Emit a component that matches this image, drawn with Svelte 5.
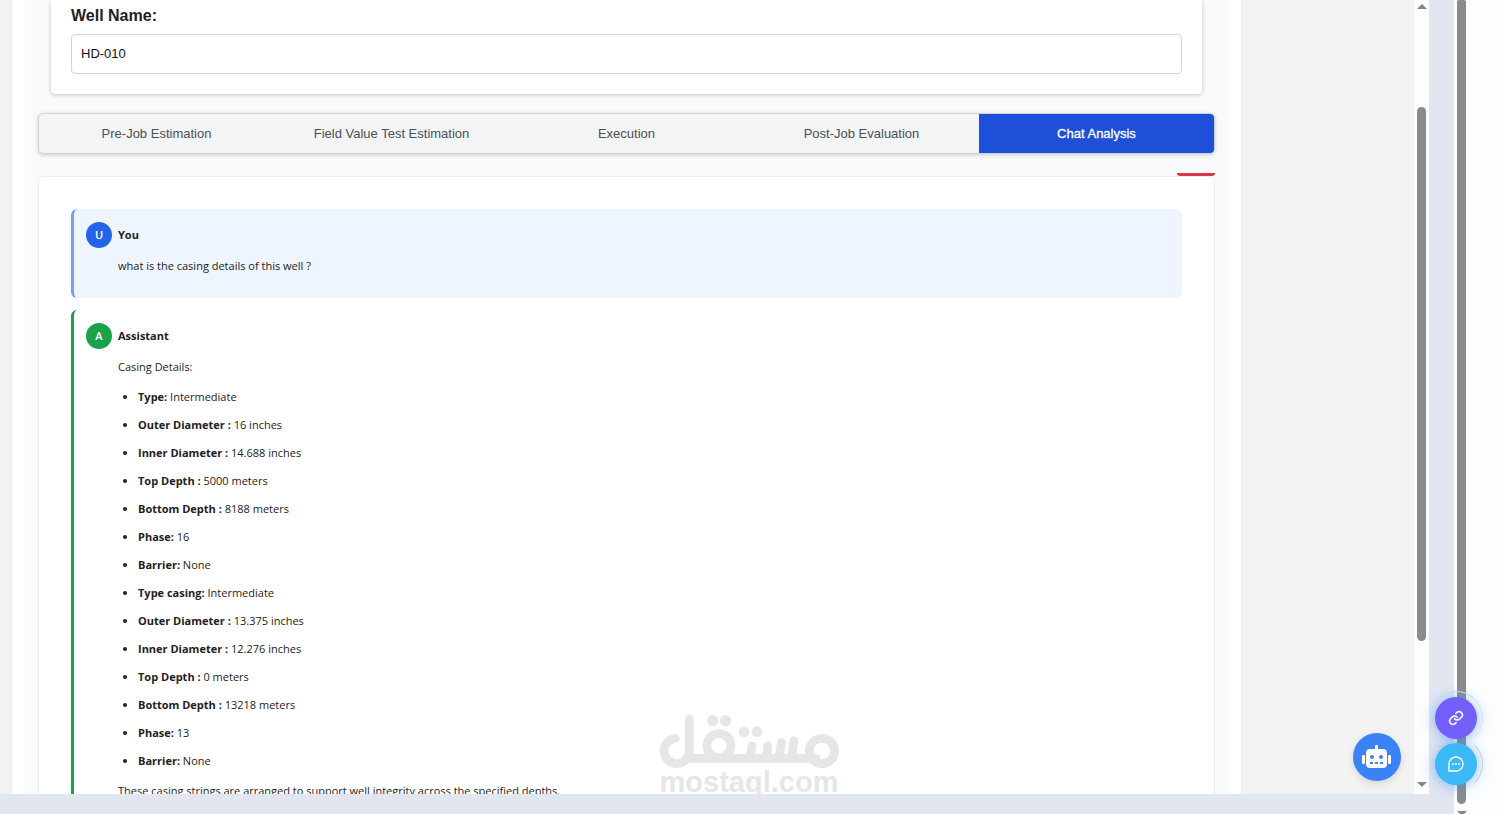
<script lang="ts">
	let wellName = $state('HD-010');
	let activeTab = $state('Chat Analysis');

	const tabs = [
		'Pre-Job Estimation',
		'Field Value Test Estimation',
		'Execution',
		'Post-Job Evaluation',
		'Chat Analysis'
	];

	const details = [
		{ label: 'Type:', value: 'Intermediate' },
		{ label: 'Outer Diameter :', value: '16 inches' },
		{ label: 'Inner Diameter :', value: '14.688 inches' },
		{ label: 'Top Depth :', value: '5000 meters' },
		{ label: 'Bottom Depth :', value: '8188 meters' },
		{ label: 'Phase:', value: '16' },
		{ label: 'Barrier:', value: 'None' },
		{ label: 'Type casing:', value: 'Intermediate' },
		{ label: 'Outer Diameter :', value: '13.375 inches' },
		{ label: 'Inner Diameter :', value: '12.276 inches' },
		{ label: 'Top Depth :', value: '0 meters' },
		{ label: 'Bottom Depth :', value: '13218 meters' },
		{ label: 'Phase:', value: '13' },
		{ label: 'Barrier:', value: 'None' }
	];
</script>

<div class="shell">
	<div class="shell__main">
		<div class="frame">
			<div class="frame__view">
				<main class="page">
					<div class="content">
						<section class="well">
							<label class="well__label" for="well-name">Well Name:</label>
							<input class="well__input" id="well-name" type="text" bind:value={wellName} />
						</section>

						<nav class="tabs">
							{#each tabs as tab}
								<button
									class="tab"
									class:tab--active={activeTab === tab}
									onclick={() => (activeTab = tab)}>{tab}</button
								>
							{/each}
						</nav>

						<section class="chat">
							<div class="chat__marker"></div>
							<article class="message message--user">
								<header class="message__head">
									<span class="avatar avatar--user">U</span>
									<strong>You</strong>
								</header>
								<div class="message__body">
									<p>what is the casing details of this well ?</p>
								</div>
							</article>

							<article class="message message--assistant">
								<header class="message__head">
									<span class="avatar avatar--assistant">A</span>
									<strong>Assistant</strong>
								</header>
								<div class="message__body">
									<p>Casing Details:</p>
									<ul>
										{#each details as item}
											<li><strong>{item.label}</strong> {item.value}</li>
										{/each}
									</ul>
									<p>These casing strings are arranged to support well integrity across the specified depths.</p>
								</div>
							</article>
						</section>
					</div>
				</main>
				<button class="bot" aria-label="Open assistant">
					<svg width="30" height="24" viewBox="0 0 30 24" fill="#fff">
						<rect x="13" y="0" width="3" height="6" rx="1" />
						<rect x="4" y="4" width="21" height="19" rx="4" />
						<rect x="0" y="10" width="3" height="9" rx="1" />
						<rect x="26" y="10" width="3" height="9" rx="1" />
						<g fill="#3b82f6">
							<circle cx="10" cy="12" r="2" />
							<circle cx="19" cy="12" r="2" />
							<rect x="8" y="17" width="3" height="2" />
							<rect x="13" y="17" width="3" height="2" />
							<rect x="18" y="17" width="3" height="2" />
						</g>
					</svg>
				</button>
			</div>
			<div class="scroll scroll--inner">
				<i class="arrow arrow--up"></i>
				<div class="scroll__track"><div class="scroll__thumb"></div></div>
				<i class="arrow"></i>
			</div>
		</div>
	</div>
	<div class="scroll scroll--outer">
		<div class="scroll__thumb"></div>
		<i class="arrow"></i>
	</div>

	<div class="floating">
		<button class="round round--link" aria-label="Copy link">
			<svg width="16" height="16" viewBox="0 0 24 24" fill="none" stroke="#fff" stroke-width="2.4" stroke-linecap="round" stroke-linejoin="round">
				<path d="M10 13a5 5 0 0 0 7.5.5l3-3a5 5 0 0 0-7-7l-1.8 1.7" />
				<path d="M14 11a5 5 0 0 0-7.5-.5l-3 3a5 5 0 0 0 7 7l1.7-1.7" />
			</svg>
		</button>
		<button class="round round--chat" aria-label="Open chat">
			<svg width="18" height="18" viewBox="0 0 18 18" fill="none" stroke="#fff" stroke-width="1.4">
				<path d="M2 16V9a7 7 0 1 1 7 7z" stroke-linejoin="round" />
				<g fill="#fff" stroke="none">
					<circle cx="6" cy="9" r="1" />
					<circle cx="9" cy="9" r="1" />
					<circle cx="12" cy="9" r="1" />
				</g>
			</svg>
		</button>
	</div>

	<div class="watermark">
		<svg width="182" height="55" viewBox="54 42 546 165" fill="none" stroke="#e6e6e6" stroke-width="26" stroke-linecap="round" aria-hidden="true">
			<circle cx="546" cy="153" r="38" />
			<circle cx="237" cy="137" r="36" />
			<path d="M106 115a38 38 0 1 0 42 38V58" />
			<path d="M140 175H528" />
			<path d="M462 122l-7 48M424 127l-6 43M383 137l-3 33M336 137l-5 33" />
			<g fill="#e6e6e6" stroke="none">
				<circle cx="218" cy="62" r="17" />
				<circle cx="257" cy="62" r="17" />
				<circle cx="312" cy="95" r="16" />
				<circle cx="351" cy="95" r="16" />
			</g>
		</svg>
		<span>mostaql.com</span>
	</div>
</div>

<style>
	:global(body) {
		margin: 0;
	}

	.shell {
		position: relative;
		display: flex;
		height: 100vh;
		overflow: hidden;
		background: #fdfeff;
		font-family: 'Liberation Sans', Arial, sans-serif;
		color: #1f2023;
	}

	.shell__main {
		flex: 1;
		min-width: 0;
		box-sizing: border-box;
		padding: 0 25px 20px 0;
		background: #e1e6f1;
	}

	.frame {
		display: flex;
		height: 100%;
		overflow: hidden;
		background: #f3f3f3;
	}

	.frame__view {
		position: relative;
		flex: 1;
		min-width: 0;
		overflow: hidden;
	}

	.page {
		margin: 0 173px 0 12px;
		padding: 0 13px;
		background: #fff;
		box-shadow: 0 0 2px rgba(0, 0, 0, 0.08);
	}

	.content {
		padding: 0 13px;
		background: #f9fafc;
	}

	.well {
		display: flex;
		flex-direction: column;
		gap: 9px;
		margin: 0 13px;
		padding: 7px 20px 20px;
		background: #fff;
		border-radius: 0 0 4px 4px;
		box-shadow: 0 1px 4px rgba(0, 0, 0, 0.22);
	}

	.well__label {
		font-size: 16px;
		line-height: 18px;
		font-weight: 700;
	}

	.well__input {
		box-sizing: border-box;
		width: 100%;
		height: 40px;
		padding: 0 9px 2px;
		border: 1px solid #d1d4da;
		border-radius: 4px;
		background: #fff;
		color: #111;
		font-family: inherit;
		font-size: 13px;
	}

	.tabs {
		display: flex;
		margin-top: 19px;
		border: 1px solid #cfd2d8;
		border-radius: 5px;
		overflow: hidden;
		background: #f2f4f6;
		box-shadow: 0 1px 4px rgba(0, 0, 0, 0.18);
	}

	.tab {
		flex: 1 1 0;
		min-width: 0;
		height: 39px;
		padding: 0;
		border: 0;
		background: none;
		color: #4b4f56;
		font-family: inherit;
		font-size: 13px;
		cursor: pointer;
	}

	.tab--active {
		background: #1d4fd8;
		color: #fff;
		-webkit-text-stroke: 0.3px #fff;
	}

	.chat {
		position: relative;
		display: flex;
		flex-direction: column;
		gap: 12px;
		margin-top: 22px;
		padding: 32px;
		border: 1px solid #eeeff1;
		border-radius: 5px;
		background: #fff;
		font-family: 'Segoe UI', 'Open Sans', sans-serif;
		font-size: 11px;
		line-height: 20px;
	}

	.chat__marker {
		position: absolute;
		top: -4px;
		right: -1px;
		width: 38px;
		height: 3px;
		border-radius: 0 0 3px 3px;
		background: #dc3545;
	}

	.message {
		padding: 13px 12px 12px;
		border-left: 3px solid;
		border-radius: 6px;
	}

	.message--user {
		border-color: #7b9cf0;
		background: #eef5ff;
	}

	.message--assistant {
		border-color: #18a34a;
	}

	.message__head {
		display: flex;
		align-items: center;
		gap: 6px;
	}

	.avatar {
		display: grid;
		place-items: center;
		width: 26px;
		height: 26px;
		border-radius: 50%;
		color: #fff;
		font-weight: 600;
	}

	.avatar--user {
		background: #2563eb;
	}

	.avatar--assistant {
		background: #18a34a;
	}

	.message__body {
		padding: 8px 0 0 32px;
	}

	.message__body p {
		margin: 0 0 10px;
	}

	.message__body ul {
		display: flex;
		flex-direction: column;
		gap: 8px;
		margin: 0 0 10px;
		padding-left: 20px;
	}

	.bot {
		position: absolute;
		right: 13px;
		bottom: 13px;
		display: grid;
		place-items: center;
		width: 48px;
		height: 48px;
		padding: 0;
		border: 0;
		border-radius: 50%;
		background: #3b82f6;
		box-shadow: 0 3px 8px rgba(0, 0, 0, 0.12);
		cursor: pointer;
	}

	.scroll {
		display: flex;
		flex-direction: column;
		background: #fcfdfd;
	}

	.scroll__thumb {
		width: 9px;
		border-radius: 5px;
		background: #8a8c8b;
	}

	.scroll--inner {
		align-items: center;
		box-sizing: border-box;
		width: 15px;
		padding: 4px 0 7px;
	}

	.scroll__track {
		flex: 1;
		padding: 98px 0 141px;
		display: flex;
	}

	.scroll--outer {
		box-sizing: border-box;
		width: 44px;
		padding-left: 3px;
	}

	.scroll--outer .scroll__thumb {
		flex: 1;
		margin-bottom: 7px;
		border-radius: 2px 2px 5px 5px;
	}

	.arrow {
		width: 0;
		height: 0;
		border: 5px solid transparent;
		border-top-color: #858786;
		border-bottom-width: 0;
	}

	.arrow--up {
		border-top-width: 0;
		border-bottom: 5px solid #858786;
	}

	.scroll--outer .arrow {
		margin-bottom: -2px;
	}

	.floating {
		position: absolute;
		right: 21px;
		bottom: 29px;
		display: flex;
		flex-direction: column;
		gap: 4px;
	}

	.round {
		position: relative;
		display: grid;
		place-items: center;
		width: 42px;
		height: 42px;
		padding: 0;
		border: 0;
		border-radius: 50%;
		box-shadow: 0 1px 14px rgba(59, 140, 246, 0.6);
		cursor: pointer;
	}

	/* pulse ring */
	.round::after {
		content: '';
		position: absolute;
		inset: -6px;
		border: 1px solid transparent;
		border-right-color: #b5d0f5;
		border-radius: 50%;
	}

	.round--link {
		background: #7360fc;
	}

	.round--link::after {
		border-top-color: #c3d8f5;
		border-right-color: #d5e2f5;
	}

	.round--chat {
		background: #3bb8f6;
	}

	.watermark {
		position: absolute;
		left: 50%;
		bottom: 18px;
		display: flex;
		flex-direction: column;
		align-items: center;
		transform: translateX(-50%);
		color: #e6e6e6;
		pointer-events: none;
	}

	.watermark span {
		font-size: 29px;
		line-height: 27px;
		font-weight: 700;
	}
</style>
